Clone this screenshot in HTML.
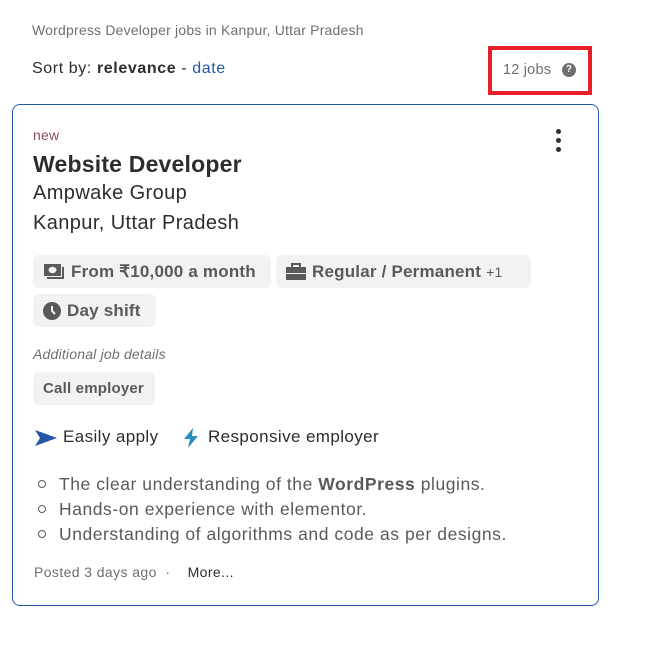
<!DOCTYPE html>
<html><head><meta charset="utf-8"><style>
*{margin:0;padding:0;box-sizing:border-box}
body{width:660px;height:645px;background:#fff;font-family:"Liberation Sans",sans-serif;color:#2d2d2d;position:relative;overflow:hidden;letter-spacing:0.2px}
.a{position:absolute;white-space:nowrap}
.chip{position:absolute;background:#f3f2f1;border-radius:6px;height:33px;font-weight:bold;font-size:17px;color:#595959;display:flex;align-items:center;padding:0 10px}
.chip svg{margin-right:6px}
ul{position:absolute;left:34px;top:473px;list-style:none;font-size:17.5px;color:#595959;letter-spacing:0.55px}
ul li{height:25px;line-height:22px;padding-left:25px;position:relative}
ul li:before{content:"";position:absolute;left:4px;top:7px;width:6px;height:6px;border:1.5px solid #595959;border-radius:50%}
</style></head><body>
<div class="a" style="left:32px;top:22px;font-size:14px;color:#6f6f6f">Wordpress Developer jobs in Kanpur, Uttar Pradesh</div>
<div class="a" style="left:32px;top:60px;font-size:16px;color:#2d2d2d;letter-spacing:0.6px">Sort by: <b>relevance</b> - <span style="color:#2557a7">date</span></div>
<div class="a" style="left:488px;top:46px;width:104px;height:49px;border:4px solid #e8202a"></div>
<div class="a" style="left:503px;top:62px;font-size:14.5px;color:#6f6f6f">12 jobs</div>
<div class="a" style="left:562px;top:63px;width:14px;height:14px;border-radius:50%;background:#6f6f6f;color:#fff;font-size:10px;font-weight:bold;text-align:center;line-height:14px">?</div>
<div class="a" style="left:12px;top:104px;width:587px;height:502px;border:1px solid #2557a7;border-radius:8px"></div>
<div class="a" style="left:556px;top:129px;width:5px;height:5px;border-radius:50%;background:#2d2d2d;box-shadow:0 9px 0 #2d2d2d,0 18px 0 #2d2d2d"></div>
<div class="a" style="left:33px;top:127px;font-size:14px;color:#8c4a5e">new</div>
<div class="a" style="left:33px;top:151px;font-size:23px;font-weight:bold;color:#2d2d2d">Website Developer</div>
<div class="a" style="left:33px;top:182px;font-size:20px;letter-spacing:0.4px">Ampwake Group</div>
<div class="a" style="left:33px;top:212px;font-size:20px;letter-spacing:0.4px">Kanpur, Uttar Pradesh</div>
<div class="chip" style="left:33px;top:255px;width:238px"><svg width="22" height="18" viewBox="0 0 22 18"><rect x="1" y="1" width="17" height="12" fill="#595959"/><ellipse cx="9.5" cy="7" rx="4" ry="3.2" fill="#f3f2f1"/><path d="M20 4v11H4" stroke="#595959" stroke-width="2" fill="none"/></svg>From ₹10,000 a month</div>
<div class="chip" style="left:276px;top:255px;width:255px"><svg width="20" height="18" viewBox="0 0 20 18"><path d="M6 4V1h8v3" stroke="#595959" stroke-width="2" fill="none"/><rect x="0" y="4" width="20" height="6" fill="#595959"/><rect x="0" y="11" width="20" height="6" fill="#595959"/></svg>Regular / Permanent <span style="font-weight:normal;font-size:14px;margin-left:5px">+1</span></div>
<div class="chip" style="left:33px;top:294px;width:123px"><svg width="18" height="18" viewBox="0 0 18 18"><circle cx="9" cy="9" r="9" fill="#595959"/><path d="M9 4v5l3 3" stroke="#f3f2f1" stroke-width="2" fill="none"/></svg>Day shift</div>
<div class="a" style="left:33px;top:346px;font-size:14px;font-style:italic;color:#6f6f6f">Additional job details</div>
<div class="chip" style="left:33px;top:372px;width:122px;font-size:15px;padding-left:10px">Call employer</div>
<svg class="a" style="left:35px;top:430px" width="22" height="16" viewBox="0 0 22 16"><path d="M0 0L22 8L0 16L5 8Z" fill="#2557a7"/></svg>
<div class="a" style="left:63px;top:427px;font-size:17px;letter-spacing:0.4px">Easily apply</div>
<svg class="a" style="left:183px;top:428px" width="16" height="20" viewBox="0 0 16 20"><path d="M10 0L1 11h6l-2 9 10-12H9z" fill="#2b8bbd"/></svg>
<div class="a" style="left:208px;top:427px;font-size:17px;letter-spacing:0.4px">Responsive employer</div>
<ul><li>The clear understanding of the <b>WordPress</b> plugins.</li><li>Hands-on experience with elementor.</li><li>Understanding of algorithms and code as per designs.</li></ul>
<div class="a" style="left:34px;top:564px;font-size:14px;color:#6f6f6f;letter-spacing:0.4px">Posted 3 days ago &nbsp;·&nbsp;&nbsp;&nbsp; <span style="color:#2d2d2d">More...</span></div>
</body></html>
